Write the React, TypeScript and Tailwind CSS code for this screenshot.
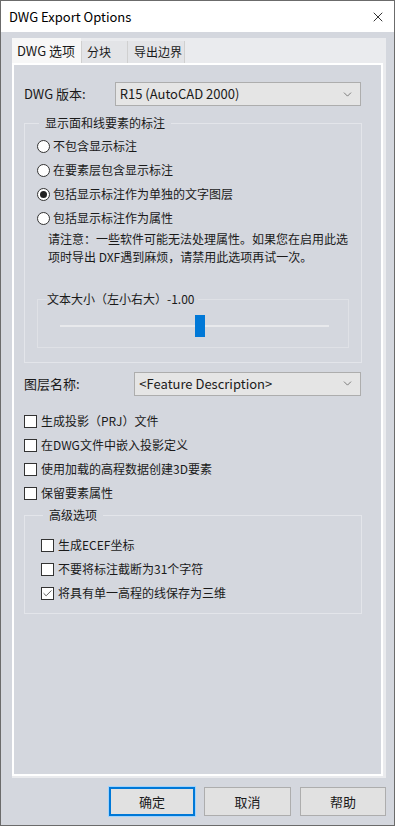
import { ChevronDown, X, Check } from 'lucide-react';

const font = { fontFamily: '"Noto Sans CJK SC", "Noto Sans", sans-serif' };

function Radio({ label, checked }: { label: string; checked?: boolean }) {
  return (
    <div className="flex items-center h-[24px]">
      <span className="w-[13px] h-[13px] rounded-full border border-[#333] bg-white flex items-center justify-center mr-[3px]">
        {checked && <span className="w-[7px] h-[7px] rounded-full bg-[#222]" />}
      </span>
      <span>{label}</span>
    </div>
  );
}

function CheckRow({ label, checked }: { label: string; checked?: boolean }) {
  return (
    <div className="flex items-center h-[24px]">
      <span className="w-[13px] h-[13px] border border-[#333] bg-white flex items-center justify-center mr-[4px]">
        {checked && <Check size={11} strokeWidth={1.6} className="text-[#222]" />}
      </span>
      <span>{label}</span>
    </div>
  );
}

function Select({ value, className }: { value: string; className: string }) {
  return (
    <div
      className={`h-[24px] bg-[#e5e5e5] border border-[#adadad] flex items-center justify-between pl-[4px] pr-[6px] ${className}`}
    >
      <span className="text-[13px]">{value}</span>
      <ChevronDown size={13} strokeWidth={1.2} className="text-[#444]" />
    </div>
  );
}

export default function App() {
  return (
    <div
      style={font}
      className="w-[395px] h-[826px] bg-[#d4d7de] border border-[#6b6b6b] flex flex-col text-[12px] leading-[16px] text-[#1a1a1a] overflow-hidden"
    >
      {/* Title bar */}
      <div className="h-[31px] bg-white flex items-center justify-between pl-[8px] pr-[8px] shrink-0">
        <span className="text-[13px] text-black">DWG Export Options</span>
        <X size={16} strokeWidth={1.2} className="text-black" />
      </div>

      {/* Tab control */}
      <div className="mt-[6px] ml-[11px] mr-[8px] bg-[#eaebee] flex flex-col h-[740px]">
        <div className="flex h-[25px] items-end whitespace-nowrap text-[12px]">
          <div className="h-[25px] w-[69px] bg-[#f7f7f7] flex items-center pl-[5px] text-[13px]">DWG 选项</div>
          <div className="h-[22px] w-[46px] bg-[#e3e4e7] border-l border-[#d0d0d0] flex items-center pl-[5px]">分块</div>
          <div className="h-[22px] w-[58px] bg-[#e3e4e7] border-l border-r border-[#d0d0d0] flex items-center pl-[6px]">导出边界</div>
        </div>

        <div className="flex-1 mr-[3px] mb-[2px] border-2 border-white bg-[#d4d7de] pl-[10px] pr-[20px] pt-[17px]">
          {/* DWG version */}
          <div className="flex items-center h-[24px]">
            <span className="w-[91px] text-[13px]">DWG 版本:</span>
            <Select value="R15 (AutoCAD 2000)" className="w-[247px]" />
          </div>

          {/* Label group */}
          <fieldset className="mt-[9px] border border-[#e3e5ea] pl-[12px] pr-[10px] pb-[14px] w-[338px]">
            <legend className="ml-[2px] px-[6px]">显示面和线要素的标注</legend>
            <div className="pt-[3px]">
              <Radio label="不包含显示标注" />
              <Radio label="在要素层包含显示标注" />
              <Radio label="包括显示标注作为单独的文字图层" checked />
              <Radio label="包括显示标注作为属性" />
            </div>
            <div className="pl-[11px] leading-[18px] w-[313px]">
              请注意：一些软件可能无法处理属性。如果您在启用此选项时导出 DXF遇到麻烦，请禁用此选项再试一次。
            </div>
            <fieldset className="mt-[25px] border border-[#dfe1e6] h-[57px] w-[312px]">
              <legend className="ml-[9px] pr-[4px]">文本大小（左小右大）-1.00</legend>
              <div className="flex items-center mt-[18px] pl-[22px] pr-[19px]">
                <div className="relative w-full h-[2px] bg-[#e8e9ec]">
                  <div className="absolute left-[135px] -top-[10px] w-[10px] h-[22px] bg-[#0078d7]" />
                </div>
              </div>
            </fieldset>
          </fieldset>

          {/* Layer name */}
          <div className="flex items-center h-[25px] mt-[8px]">
            <span className="w-[111px] text-[13px]">图层名称:</span>
            <Select value="<Feature Description>" className="w-[228px]" />
          </div>

          <div className="mt-[13px]">
            <CheckRow label="生成投影（PRJ）文件" />
            <CheckRow label="在DWG文件中嵌入投影定义" />
            <CheckRow label="使用加载的高程数据创建3D要素" />
            <CheckRow label="保留要素属性" />
          </div>

          {/* Advanced */}
          <fieldset className="mt-[2px] border border-[#e3e5ea] pl-[16px] pb-[8px] w-[338px]">
            <legend className="ml-[2px] px-[6px]">高级选项</legend>
            <div className="pt-[10px]">
              <CheckRow label="生成ECEF坐标" />
              <CheckRow label="不要将标注截断为31个字符" />
              <CheckRow label="将具有单一高程的线保存为三维" checked />
            </div>
          </fieldset>
        </div>
      </div>

      {/* Buttons */}
      <div className="flex justify-end gap-[9px] pr-[8px] mt-[9px]">
        <button className="w-[86px] h-[29px] bg-[#e1e1e1] border-2 border-[#0078d7] outline outline-1 outline-[#9fd4ff] text-[13px]">确定</button>
        <button className="w-[87px] h-[29px] bg-[#e1e1e1] border border-[#adadad] text-[13px]">取消</button>
        <button className="w-[86px] h-[29px] bg-[#e1e1e1] border border-[#adadad] text-[13px]">帮助</button>
      </div>
    </div>
  );
}
